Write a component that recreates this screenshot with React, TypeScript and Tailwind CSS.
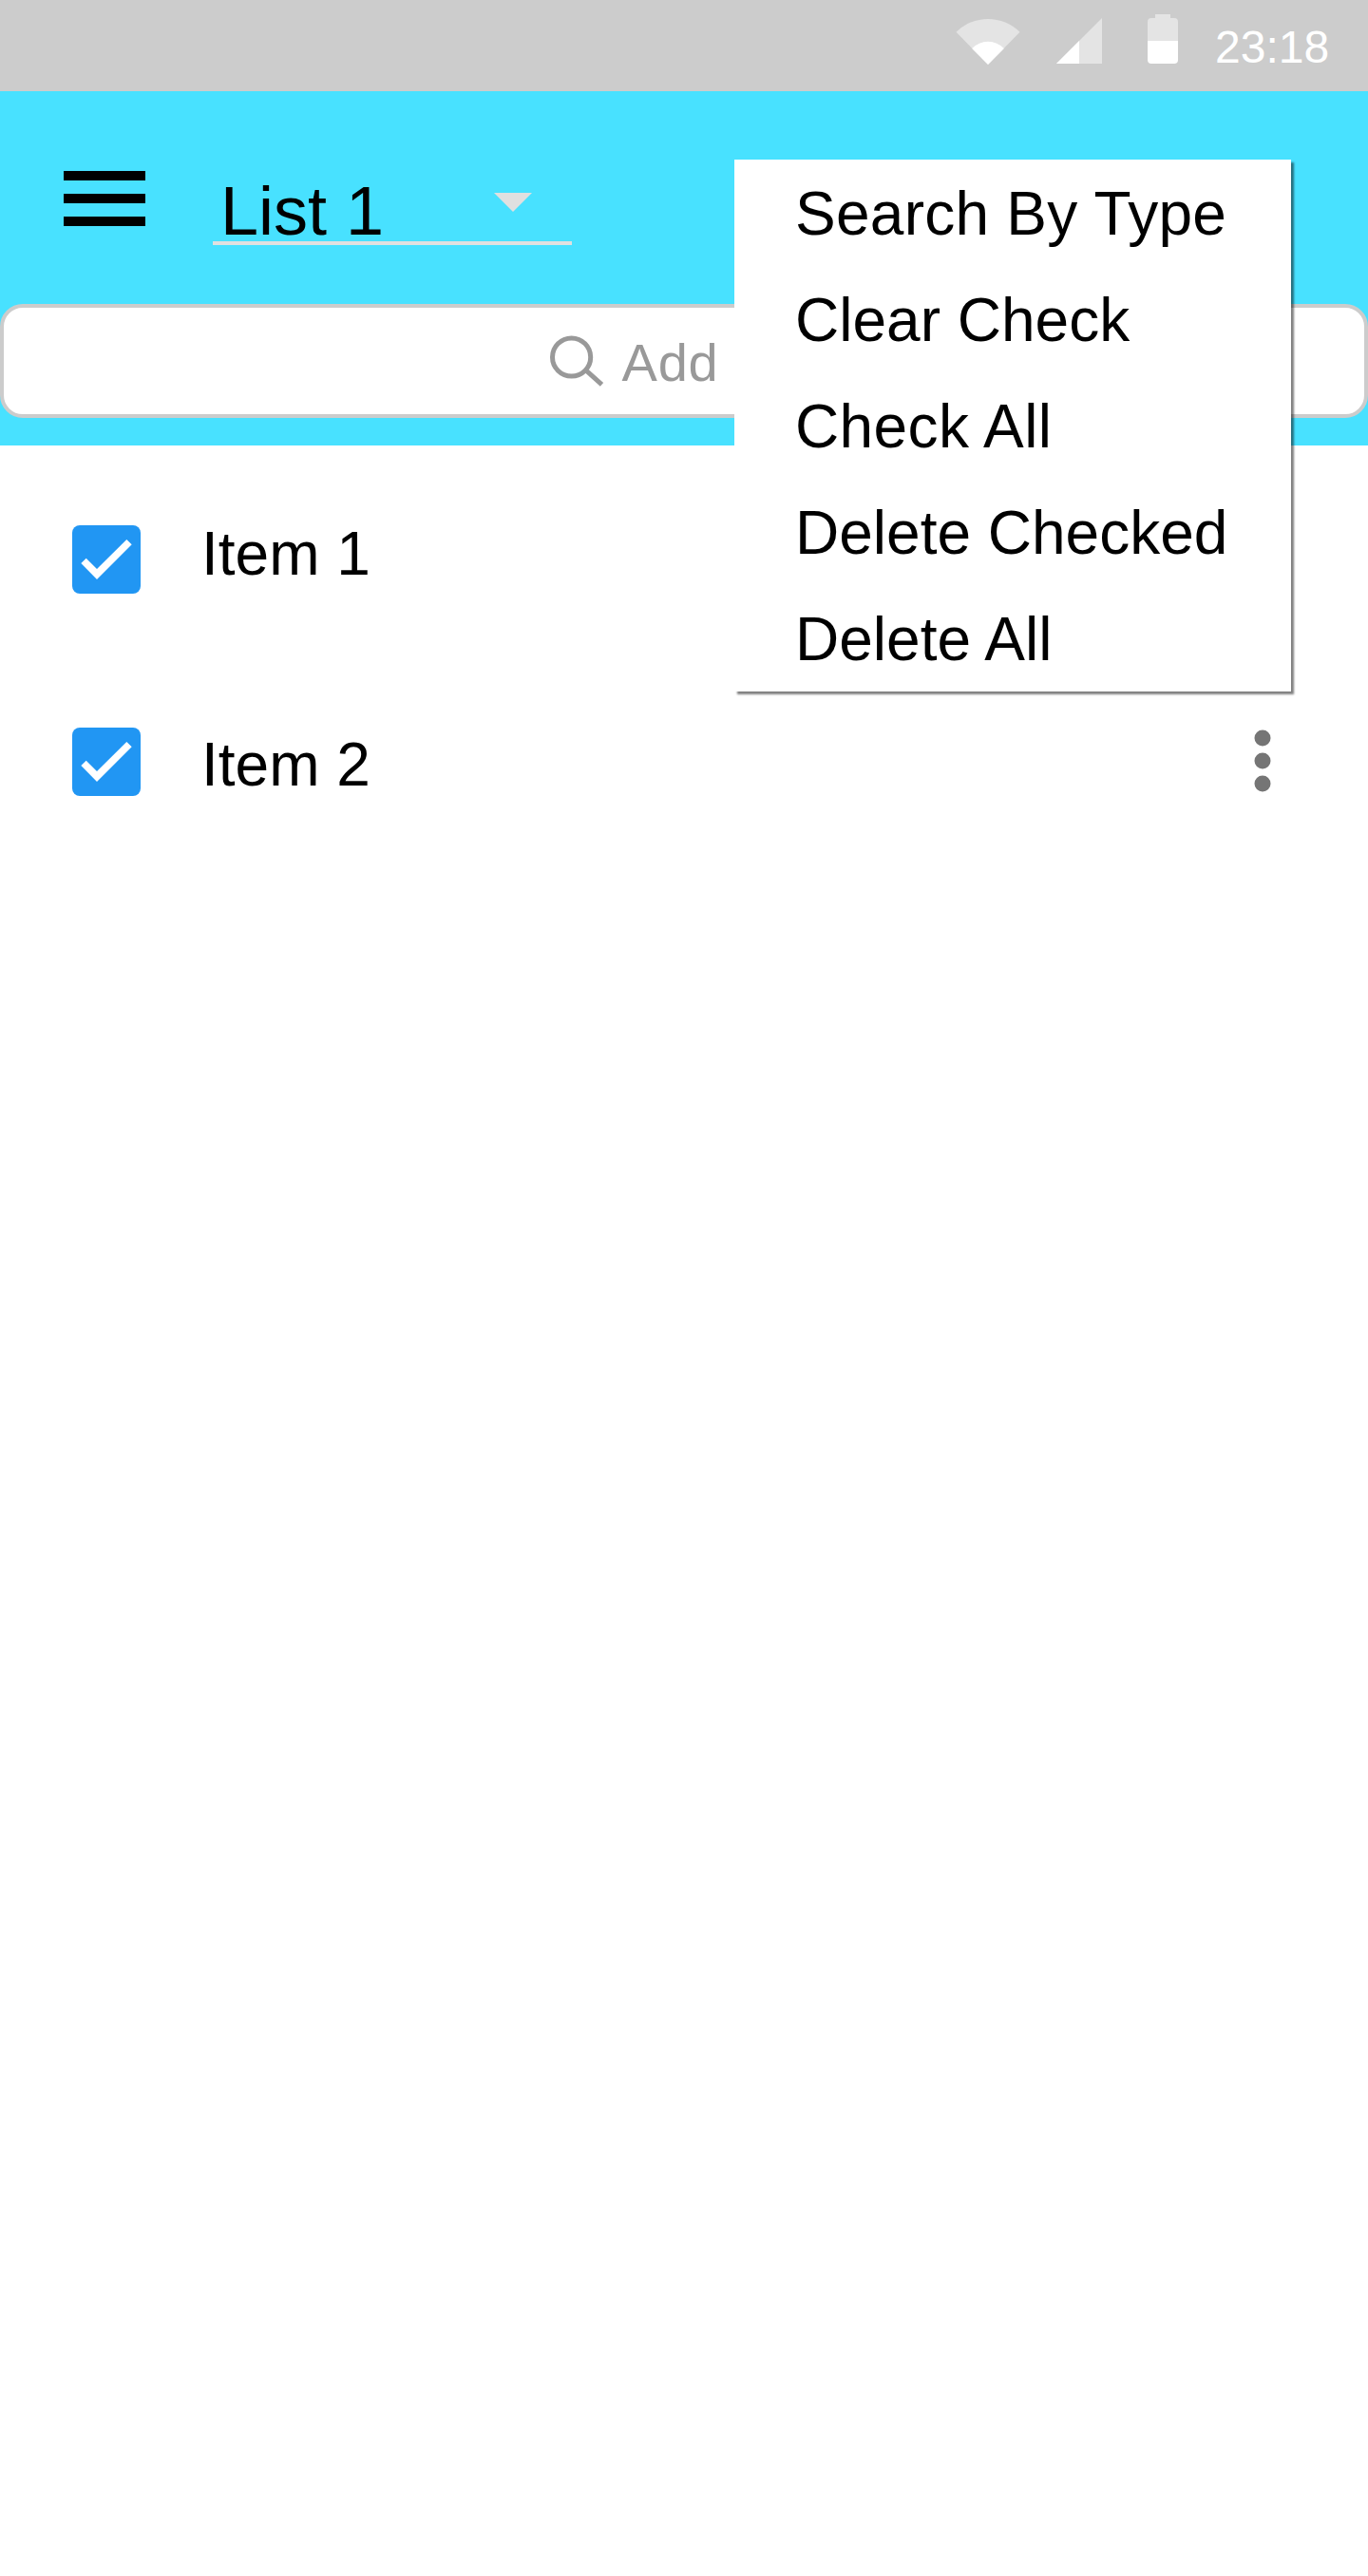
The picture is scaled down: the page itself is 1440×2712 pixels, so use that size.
import React from "react";

const menuItems = [
  { label: "Search By Type", spacing: "tracking-[0.25px]" },
  { label: "Clear Check", spacing: "tracking-normal" },
  { label: "Check All", spacing: "tracking-[0.4px]" },
  { label: "Delete Checked", spacing: "tracking-normal" },
  { label: "Delete All", spacing: "tracking-normal" },
];

function StatusIcons() {
  return (
    <svg className="h-24 w-[240px]" viewBox="1000 0 240 96">
      <path d="M1040 68 L1006.5 33.8 A47.5 47.5 0 0 1 1073.5 33.8 Z" fill="#e4e4e4" />
      <path d="M1040 68 L1023.1 51 A23.6 23.6 0 0 1 1056.9 51 Z" fill="#fff" />
      <path d="M1160 19 V67 H1112 Z" fill="#e4e4e4" />
      <path d="M1136 43 V67 H1112 Z" fill="#fff" />
      <path d="M1208 43 V23 a4 4 0 0 1 4-4 h4 v-4 h16 v4 h4 a4 4 0 0 1 4 4 V43 Z" fill="#e4e4e4" />
      <path d="M1208 43 H1240 V63 a4 4 0 0 1 -4 4 H1212 a4 4 0 0 1 -4 -4 Z" fill="#fff" />
    </svg>
  );
}

function Checkbox() {
  return (
    <span className="block size-[72px] shrink-0 rounded-lg bg-[#2196f3]">
      <svg className="size-[72px]" viewBox="0 0 72 72" fill="#fff">
        <path d="M9.3 40 L14.7 34.7 L26 46 L57.3 14.9 L62.7 20.3 L26 57 Z" />
      </svg>
    </span>
  );
}

function MoreIcon() {
  return (
    <svg className="h-[66px] w-[18px]" viewBox="0 0 18 66" fill="#757575">
      <circle cx="9" cy="9" r="8.5" />
      <circle cx="9" cy="33" r="8.5" />
      <circle cx="9" cy="57" r="8.5" />
    </svg>
  );
}

export default function App() {
  return (
    <div className="relative flex h-[2712px] w-[1440px] flex-col overflow-hidden bg-white font-['Liberation_Sans',Arial,sans-serif] text-black">
      <div className="flex h-24 shrink-0 bg-[#ccc] pl-[1000px] text-white">
        <StatusIcons />
        <span className="ml-[39px] pt-px text-[48px] leading-[98px] whitespace-nowrap">23:18</span>
      </div>

      <header className="flex h-[373px] shrink-0 flex-col bg-[#48e1ff]">
        <div className="flex h-56 items-start pl-[67px]">
          <button className="mt-[84px] flex w-[86px] flex-col gap-3.5" aria-label="Menu">
            <span className="h-2.5 w-full bg-black" />
            <span className="h-2.5 w-full bg-black" />
            <span className="h-2.5 w-full bg-black" />
          </button>
          <button className="mt-[82px] ml-[71px] flex h-20 w-[378px] items-start justify-between border-b-4 border-[#e0e0e0] pr-[42px] pl-2">
            <span className="pt-1 text-[72px] leading-[80px] whitespace-nowrap">List 1</span>
            <svg className="mt-[25px] h-5 w-10" viewBox="0 0 40 20">
              <path d="M0 0H40L20 20Z" fill="#e0e0e0" />
            </svg>
          </button>
        </div>
        <div className="flex h-[120px] items-center rounded-3xl border-4 border-[#ccc] bg-white pl-[571px] text-[#999]">
          <svg className="h-[60px] w-[64px]" viewBox="575 350 64 60" fill="none" stroke="#999" strokeWidth="5">
            <circle cx="601.6" cy="376" r="20.1" />
            <path d="M616.5 389.7 L633.5 404.8" />
          </svg>
          <span className="ml-[15.5px] pt-[3px] text-[56px] leading-none tracking-[0.8px]">Add</span>
        </div>
      </header>

      <main className="flex flex-col pl-[76px]">
        <div className="mt-[84px] flex h-[72px] items-start">
          <Checkbox />
          <span className="-mt-1 ml-16 text-[64px] leading-[68px]">Item 1</span>
        </div>
        <div className="mt-[141px] flex h-[72px] items-start">
          <Checkbox />
          <span className="mt-[5px] ml-16 text-[64px] leading-[68px]">Item 2</span>
          <button className="mt-[2px] mr-[102px] ml-auto" aria-label="More">
            <MoreIcon />
          </button>
        </div>
      </main>

      <div className="absolute top-[168px] left-[773px] h-[560px] w-[586px] bg-white pt-px pl-16 shadow-[3px_3px_2px_rgba(0,0,0,0.5)]">
        {menuItems.map(({ label, spacing }) => (
          <div key={label} className={`text-[64px] leading-[112px] whitespace-nowrap ${spacing}`}>
            {label}
          </div>
        ))}
      </div>
    </div>
  );
}
